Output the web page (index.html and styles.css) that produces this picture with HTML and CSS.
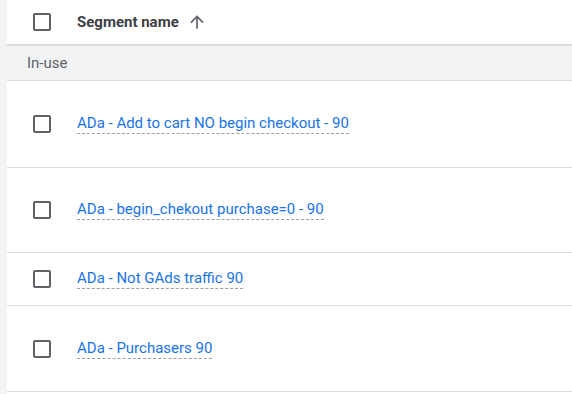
FILE: index.html
```html
<!DOCTYPE html>
<html lang="en">
<head>
    <meta charset="UTF-8">
    <meta name="viewport" content="width=device-width, initial-scale=1.0">
    <title>Segments</title>
    <link rel="stylesheet" href="styles.css">
</head>
<body>
    <div class="page">
        <div class="rail"></div>
        <div class="table">
            <div class="head-row">
                <span class="checkbox"></span>
                <span class="head-label">Segment name</span>
                <svg class="sort-icon" viewBox="0 0 24 24" width="20" height="20">
                    <path d="M4 12l1.41 1.41L11 7.83V20h2V7.83l5.58 5.59L20 12l-8-8-8 8z" fill="#5f6368"/>
                </svg>
            </div>
            <div class="group-row">In-use</div>
            <div class="row first">
                <span class="checkbox"></span>
                <a class="segment-link" href="#">ADa - Add to cart NO begin checkout - 90</a>
            </div>
            <div class="row mid">
                <span class="checkbox"></span>
                <a class="segment-link" href="#">ADa - begin_chekout purchase=0 - 90</a>
            </div>
            <div class="row short">
                <span class="checkbox"></span>
                <a class="segment-link" href="#">ADa - Not GAds traffic 90</a>
            </div>
            <div class="row tall">
                <span class="checkbox"></span>
                <a class="segment-link" href="#">ADa - Purchasers 90</a>
            </div>
        </div>
    </div>
</body>
</html>
```

FILE: styles.css
```css
body {
    margin: 0;
    font-family: Roboto, "Liberation Sans", Arial, sans-serif;
    background-color: #fff;
}
.page {
    display: flex;
    min-height: 394px;
}
.rail {
    width: 7px;
    background-color: #f1f3f4;
    flex-shrink: 0;
}
.table {
    flex: 1;
}
.head-row {
    display: flex;
    align-items: center;
    height: 44px;
    padding-left: 26px;
    border-bottom: 2px solid #dadce0;
}
.head-label {
    margin-left: 26px;
    font-size: 15px;
    font-weight: bold;
    color: #3c4043;
}
.sort-icon {
    margin-left: 8px;
}
.group-row {
    display: flex;
    align-items: center;
    height: 34px;
    padding-left: 20px;
    background-color: #f1f3f4;
    border-bottom: 1px solid #dadce0;
    font-size: 15px;
    color: #5f6368;
}
.row {
    display: flex;
    align-items: center;
    padding-left: 26px;
    border-bottom: 1px solid #dadce0;
}
.row.first {
    height: 86px;
}
.row.mid {
    height: 84px;
}
.row.tall {
    height: 85px;
}
.row.short {
    height: 52px;
}
.checkbox {
    display: block;
    width: 18px;
    height: 18px;
    box-sizing: border-box;
    border: 2px solid #5f6368;
    border-radius: 2px;
    flex-shrink: 0;
}
.segment-link {
    margin-left: 26px;
    font-size: 15px;
    color: #1a73e8;
    text-decoration: none;
    border-bottom: 1px dashed #9aa0a6;
    line-height: 19px;
}
```
